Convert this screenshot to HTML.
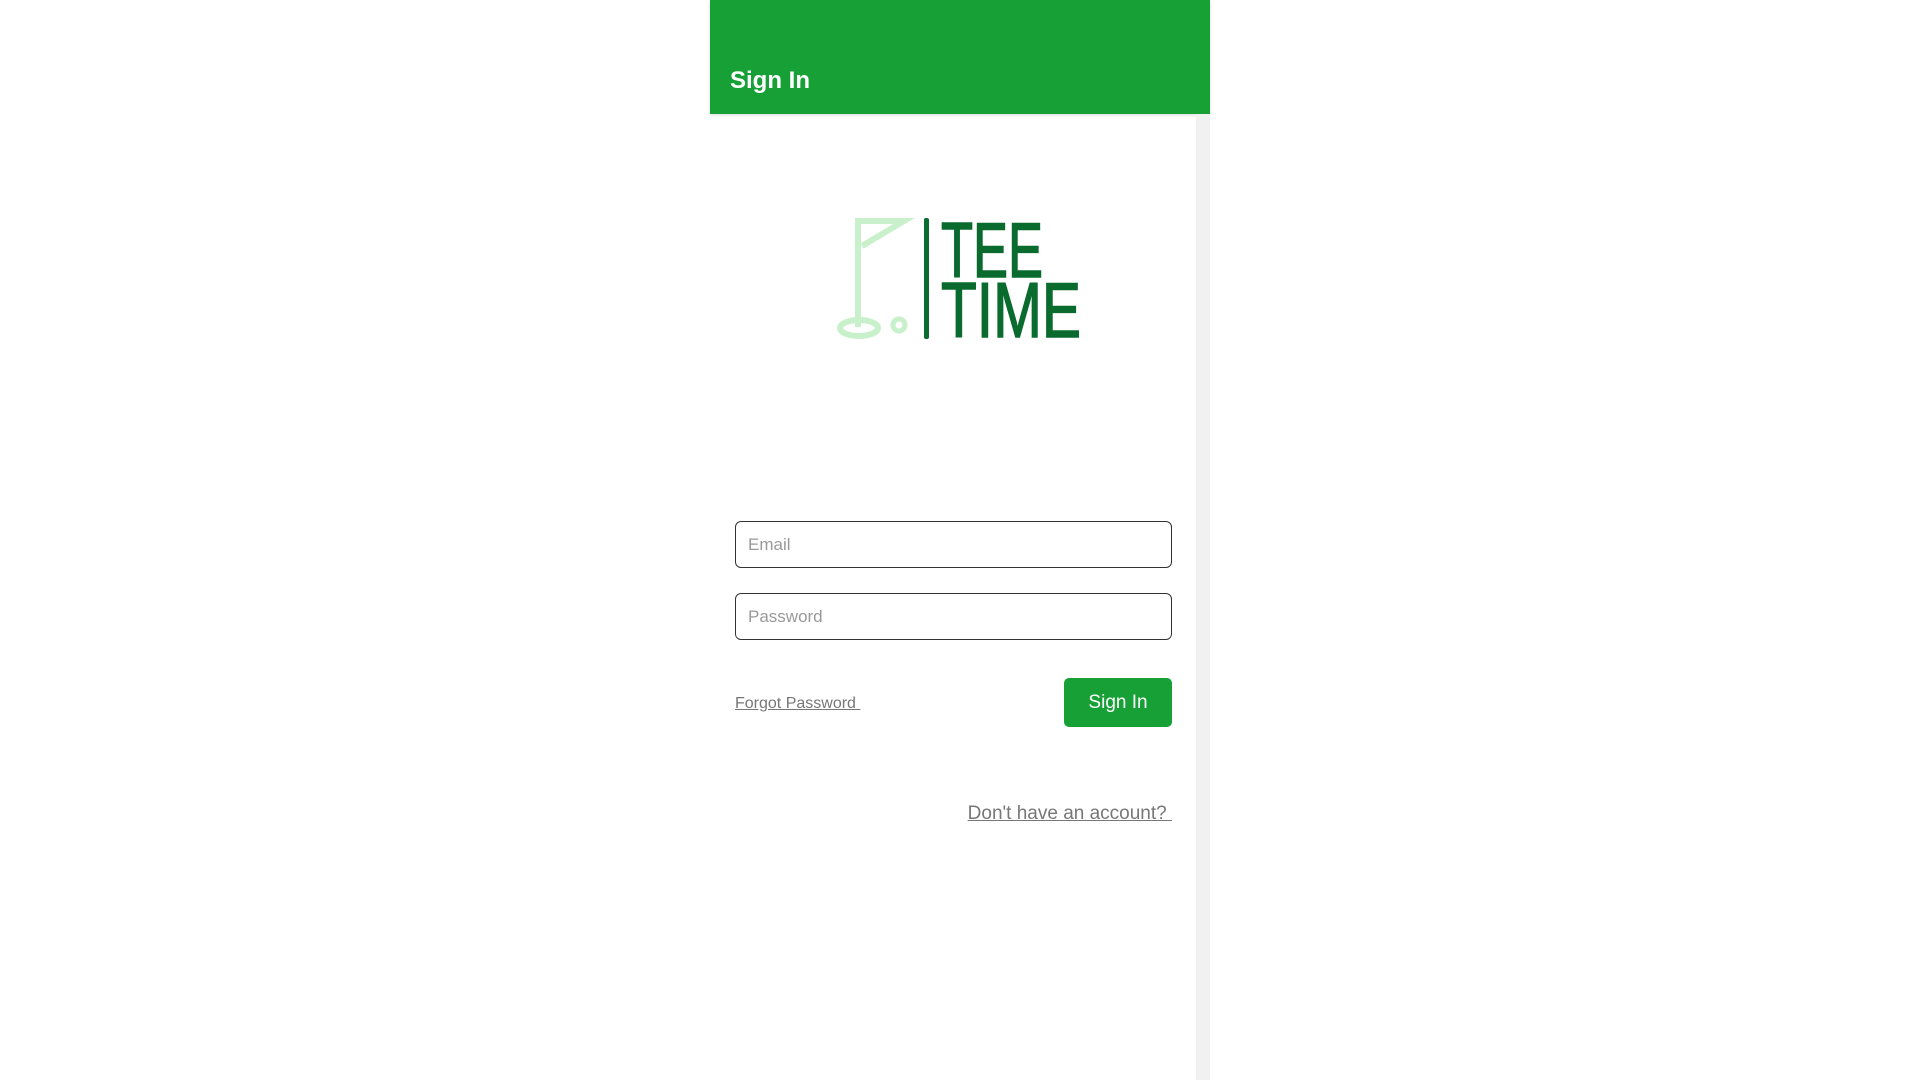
<!DOCTYPE html>
<html><head><meta charset="utf-8"><style>
*{margin:0;padding:0;box-sizing:border-box}
body{width:1920px;height:1080px;background:#fff;font-family:"Liberation Sans",Roboto,sans-serif;position:relative;overflow:hidden}
.hdr{position:absolute;left:710px;top:0;width:500px;height:114px;background:#17a035;box-shadow:0 1px 3px rgba(0,0,0,.15)}
.hdr span{position:absolute;left:20px;top:67px;color:#fff;font-weight:bold;font-size:24px}
.sb{position:absolute;left:1196px;top:114px;width:14px;height:966px;background:#f1f1f1}
.in{position:absolute;left:735px;width:437px;height:47px;border:1.5px solid #333;border-radius:6px;color:#999;font-size:17px;padding-left:12px;line-height:45px}
.fp{position:absolute;left:735px;top:695px;font-size:16px;color:#777;text-decoration:underline}
.btn{position:absolute;left:1064px;top:678px;width:108px;height:49px;background:#17a035;border-radius:5px;color:#fff;font-size:19px;text-align:center;line-height:49px}
.dh{position:absolute;right:748px;top:803px;font-size:19px;color:#777;text-decoration:underline}
</style></head><body>
<div class="hdr"><span>Sign In</span></div>
<div class="sb"></div>
<svg style="position:absolute;left:0;top:0" width="1920" height="400">
<g fill="none" stroke="#c8f0cb" stroke-width="6">
<path d="M858 327 V221 H904 L862 246"/>
<ellipse cx="859" cy="328" rx="19" ry="8"/>
<circle cx="899" cy="325" r="6" stroke-width="5"/>
</g>
<rect x="924" y="218" width="5" height="121" rx="2" fill="#0a6b2e"/>
<g fill="#0a6b2e" stroke="#0a6b2e" stroke-width="1.5">
<text x="941" y="277" font-size="78" textLength="102" lengthAdjust="spacingAndGlyphs" font-family="Liberation Sans">TEE</text>
<text x="941" y="337" font-size="78" textLength="140" lengthAdjust="spacingAndGlyphs" font-family="Liberation Sans">TIME</text>
</g>
</svg>
<div class="in" style="top:521px">Email</div>
<div class="in" style="top:593px">Password</div>
<div class="fp">Forgot Password&nbsp;</div>
<div class="btn">Sign In</div>
<div class="dh">Don't have an account?&nbsp;</div>
</body></html>
